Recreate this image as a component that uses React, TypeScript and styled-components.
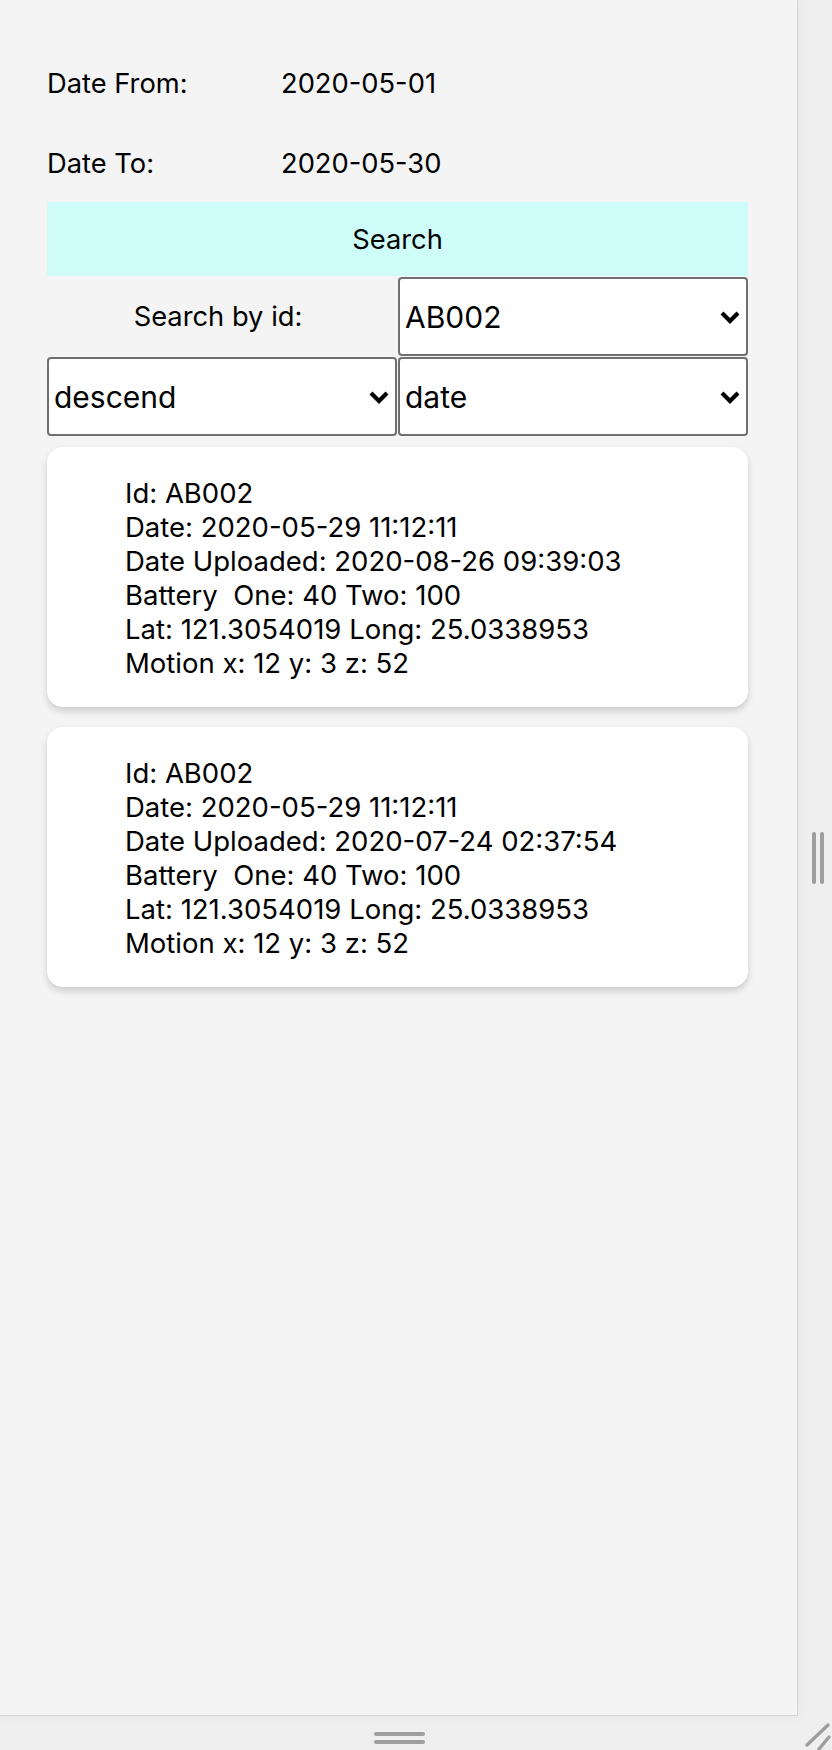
import React from "react";
import styled, { createGlobalStyle } from "styled-components";

const GlobalStyle = createGlobalStyle`
  html, body { margin: 0; padding: 0; }
  body {
    background: #eeeeee;
    font-family: Inter, "Noto Sans", "Liberation Sans", sans-serif;
    color: #000;
  }
  * { box-sizing: border-box; }
`;

const Shell = styled.div`
  display: grid;
  grid-template-columns: 798px 34px;
  grid-template-rows: 1716px 34px;
  width: 832px;
  height: 1750px;
  background: #efefef;
  overflow: hidden;
`;

const Viewport = styled.div`
  background: #f4f4f4;
  border-right: 1px solid #d4d4d4;
  border-bottom: 1px solid #d4d4d4;
  box-shadow: 0 0 14px rgba(0, 0, 0, 0.05);
  padding: 64px 49px 0 47px;
  position: relative;
  z-index: 1;
`;

const DateGrid = styled.div`
  display: grid;
  grid-template-columns: 234px 1fr;
  row-gap: 40px;
  font-size: 27.3px;
  line-height: 40px;
`;

const Cell = styled.div`
  white-space: nowrap;
`;

const SearchButton = styled.button`
  display: block;
  width: 100%;
  height: 74px;
  margin-top: 18px;
  border: none;
  background: #cefcf8;
  font-family: inherit;
  font-size: 27.3px;
  color: #000;
  padding: 0;
  cursor: pointer;
`;

const Controls = styled.div`
  display: grid;
  grid-template-columns: 1fr 1fr;
  column-gap: 1px;
  row-gap: 1px;
  margin-top: 1px;
`;

const IdLabel = styled.div`
  display: flex;
  align-items: center;
  justify-content: center;
  font-size: 27.3px;
  padding-right: 8px;
`;

const SelectWrap = styled.div`
  position: relative;
  height: 79px;
`;

const Select = styled.select`
  appearance: none;
  -webkit-appearance: none;
  width: 100%;
  height: 100%;
  border: 2px solid #707070;
  border-radius: 4px;
  background: #fff;
  font-family: inherit;
  font-size: 30px;
  color: #000;
  padding: 0 40px 0 5px;
  outline: none;
`;

const Chevron = styled.svg`
  position: absolute;
  right: 7px;
  top: 50%;
  transform: translateY(-50%);
  pointer-events: none;
`;

const CardList = styled.div`
  display: flex;
  flex-direction: column;
  gap: 20px;
  margin-top: 11px;
`;

const Card = styled.div`
  background: #fff;
  border-radius: 16px;
  box-shadow: 0 4px 7px rgba(0, 0, 0, 0.16);
  padding: 29px 0 27px 78px;
  font-size: 27.5px;
  line-height: 34px;
`;

const Line = styled.div`
  white-space: pre;
`;

const RightGutter = styled.div`
  display: flex;
  align-items: center;
  gap: 4px;
  padding-left: 14px;
`;

const VBar = styled.span`
  width: 4px;
  height: 52px;
  border-radius: 2px;
  background: #9e9e9e;
`;

const BottomGutter = styled.div`
  display: flex;
  flex-direction: column;
  align-items: center;
  gap: 4px;
  padding-top: 16px;
`;

const HBar = styled.span`
  width: 51px;
  height: 4px;
  border-radius: 2px;
  background: #9e9e9e;
`;

const Corner = styled.div`
  position: relative;
`;

const ChevronIcon = () => (
  <Chevron width="22" height="14" viewBox="0 0 22 14">
    <path
      d="M3 3 L11 11 L19 3"
      fill="none"
      stroke="#000"
      strokeWidth="4.2"
      strokeLinecap="butt"
      strokeLinejoin="miter"
    />
  </Chevron>
);

type Option = { value: string };

const Dropdown = ({ value, options }: { value: string; options: Option[] }) => (
  <SelectWrap>
    <Select defaultValue={value}>
      {options.map((o) => (
        <option key={o.value} value={o.value}>
          {o.value}
        </option>
      ))}
    </Select>
    <ChevronIcon />
  </SelectWrap>
);

type Record = {
  id: string;
  date: string;
  uploaded: string;
  one: number;
  two: number;
  lat: string;
  long: string;
  x: number;
  y: number;
  z: number;
};

const records: Record[] = [
  {
    id: "AB002",
    date: "2020-05-29 11:12:11",
    uploaded: "2020-08-26 09:39:03",
    one: 40,
    two: 100,
    lat: "121.3054019",
    long: "25.0338953",
    x: 12,
    y: 3,
    z: 52,
  },
  {
    id: "AB002",
    date: "2020-05-29 11:12:11",
    uploaded: "2020-07-24 02:37:54",
    one: 40,
    two: 100,
    lat: "121.3054019",
    long: "25.0338953",
    x: 12,
    y: 3,
    z: 52,
  },
];

export default function App() {
  return (
    <>
      <GlobalStyle />
      <Shell>
        <Viewport>
          <DateGrid>
            <Cell>Date From:</Cell>
            <Cell>2020-05-01</Cell>
            <Cell>Date To:</Cell>
            <Cell>2020-05-30</Cell>
          </DateGrid>
          <SearchButton>Search</SearchButton>
          <Controls>
            <IdLabel>Search by id:</IdLabel>
            <Dropdown value="AB002" options={[{ value: "AB001" }, { value: "AB002" }]} />
            <Dropdown value="descend" options={[{ value: "ascend" }, { value: "descend" }]} />
            <Dropdown value="date" options={[{ value: "date" }, { value: "id" }]} />
          </Controls>
          <CardList>
            {records.map((r, i) => (
              <Card key={i}>
                <Line>Id: {r.id}</Line>
                <Line>Date: {r.date}</Line>
                <Line>Date Uploaded: {r.uploaded}</Line>
                <Line>{`Battery  One: ${r.one} Two: ${r.two}`}</Line>
                <Line>
                  Lat: {r.lat} Long: {r.long}
                </Line>
                <Line>
                  Motion x: {r.x} y: {r.y} z: {r.z}
                </Line>
              </Card>
            ))}
          </CardList>
        </Viewport>
        <RightGutter>
          <VBar />
          <VBar />
        </RightGutter>
        <BottomGutter>
          <HBar />
          <HBar />
        </BottomGutter>
        <Corner>
          <svg width="34" height="34" viewBox="0 0 34 34">
            <path d="M9 29 L30 9" stroke="#9e9e9e" strokeWidth="3.4" strokeLinecap="round" />
            <path d="M21 33 L31 21" stroke="#9e9e9e" strokeWidth="3.4" strokeLinecap="round" />
          </svg>
        </Corner>
      </Shell>
    </>
  );
}
